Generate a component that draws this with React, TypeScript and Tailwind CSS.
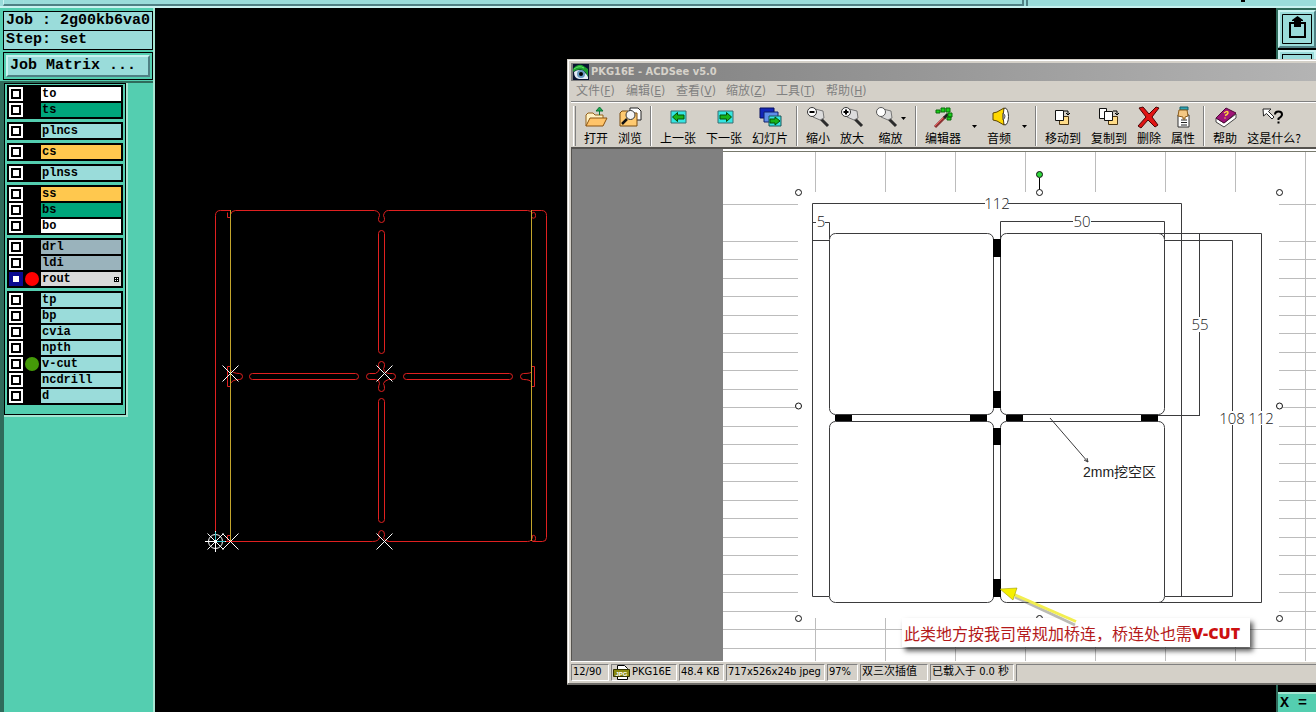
import React from "react";

type Layer = { name: string; tone: string; dot?: string; active?: boolean };

const AQUA = "bg-[#9adcda]";

const groups: Layer[][] = [
  [
    { name: "to", tone: "bg-white" },
    { name: "ts", tone: "bg-[#00a67c]" },
  ],
  [{ name: "plncs", tone: AQUA }],
  [{ name: "cs", tone: "bg-[#ffc84e]" }],
  [{ name: "plnss", tone: AQUA }],
  [
    { name: "ss", tone: "bg-[#ffc84e]" },
    { name: "bs", tone: "bg-[#00a67c]" },
    { name: "bo", tone: "bg-white" },
  ],
  [
    { name: "drl", tone: "bg-[#9ab3bc]" },
    { name: "ldi", tone: "bg-[#9ab3bc]" },
    { name: "rout", tone: "bg-[#d9d9d9]", dot: "bg-[#ff0000]", active: true },
  ],
  [
    { name: "tp", tone: AQUA },
    { name: "bp", tone: AQUA },
    { name: "cvia", tone: AQUA },
    { name: "npth", tone: AQUA },
    { name: "v-cut", tone: AQUA, dot: "bg-[#449a08]" },
    { name: "ncdrill", tone: AQUA },
    { name: "d", tone: AQUA },
  ],
];

function LayerRow({ layer }: { layer: Layer }) {
  return (
    <label className="flex h-[14px] items-center">
      <input
        type="checkbox"
        defaultChecked={layer.active}
        className="size-[14px] shrink-0 appearance-none border-2 border-white bg-white shadow-[inset_0_0_0_2px_#000] checked:border-[#0a0a90] checked:shadow-[inset_0_0_0_2px_#0a0a90]"
      />
      <span className="flex w-[18px] shrink-0 justify-center">
        {layer.dot && <span className={`size-[14px] rounded-full ${layer.dot}`} />}
      </span>
      <span
        className={`flex h-[14px] flex-1 items-center justify-between overflow-hidden pl-px text-[12px] leading-[14px] ${layer.tone}`}
      >
        {layer.name}
        {layer.active && (
          <svg viewBox="0 0 5 5" className="mr-0.5 size-[5px]" shapeRendering="crispEdges">
            <path d="M0 0h5v5H0z" fill="#000" />
            <path d="M1 1h1v1H1zM3 1h1v1H3zM1 3h1v1H1zM3 3h1v1H3z" fill="#fff" />
          </svg>
        )}
      </span>
    </label>
  );
}

function Sidebar() {
  return (
    <aside className="flex w-[155px] shrink-0 flex-col border-r-2 border-[#a6e6d2] bg-[#54ceb0] font-['Liberation_Mono',monospace] font-bold text-black">
      <div className="flex flex-col gap-0.5 pt-[3px] pb-px pl-[3px]">
        <dl className="border border-black bg-[#9adcda] text-[15px] whitespace-pre">
          <div className="flex h-[19px] items-center border-b border-black pl-0.5">
            <dt>Job : </dt>
            <dd>2g00kb6va0</dd>
          </div>
          <div className="flex h-[18px] items-center pl-0.5">
            <dt>Step: </dt>
            <dd>set</dd>
          </div>
        </dl>
        <div className="border border-black p-0.5">
          <button className="flex h-[22px] w-full items-center border-2 border-t-[#c8f2f0] border-r-[#4f8084] border-b-[#4f8084] border-l-[#c8f2f0] bg-[#9adcda] pl-0.5 text-[15px] whitespace-pre">
            Job Matrix ...
          </button>
        </div>
      </div>
      <div className="flex flex-1 items-start border-t-2 border-l-4 border-[#2f6b5b]">
        <div className="w-[124px] border-r-2 border-b-2 border-[#a6e6d2]">
          <div className="flex flex-col gap-[3px] border border-black px-0.5 pt-px pb-[9px]">
            {groups.map((g) => (
              <div key={g[0].name} className="flex flex-col gap-0.5 bg-black p-0.5">
                {g.map((l) => (
                  <LayerRow key={l.name} layer={l} />
                ))}
              </div>
            ))}
          </div>
        </div>
      </div>
    </aside>
  );
}

function Cross({ x, y }: { x: number; y: number }) {
  return <path d={`M${x - 8} ${y - 8}l16 16M${x + 8} ${y - 8}l-16 16`} stroke="#fff" fill="none" />;
}

function RoutDrawing() {
  return (
    <svg viewBox="202 198 360 360" className="h-[360px] w-[360px] shrink-0" fill="none">
      <g stroke="#e02020">
        <path d="M215.500 541.500V215.500Q215.500 210.500 220.500 210.500H230.500V217.500H227.500V212.500M230.500 214.500Q231.500 210.500 235.500 210.500H374.500Q379.500 211.500 379.500 215.500Q378.500 217.500 378.500 219.500Q378.500 222.500 381.500 222.500T384.500 219.500Q384.500 217.500 383.500 215.500Q384.500 210.500 388.500 210.500H527.500Q531.500 210.500 532.500 213.500M531.500 210.500H541.500Q546.500 210.500 546.500 215.500V537.500Q546.500 541.500 542.500 541.500H532.500M532.500 212.500q3 -1 3 3t-4 2v-5" />
        <path d="M215.500 541.500H372.500Q378.500 541.500 379.500 537.500Q378.500 536.500 378.500 534.500Q378.500 530.500 381.500 530.500T384.500 534.500Q384.500 536.500 383.500 537.500Q384.500 541.500 389.500 541.500H527.500Q532.500 541.500 532.500 535.500q3 -1 3 3t-4 2M230.500 535.500h-3v5" />
        <rect x="378.500" y="230.500" width="6" height="123" rx="3" />
        <rect x="378.500" y="398.500" width="6" height="124" rx="3" />
        <rect x="249.500" y="373.500" width="109" height="6" rx="3" />
        <rect x="403.500" y="373.500" width="109" height="6" rx="3" />
        <path d="M227.500 366.500h3V369.500Q232.500 373.500 239.500 373.500Q242.500 373.500 242.500 376.500T239.500 379.500Q232.500 379.500 230.500 383.500V386.500H227.500Z" />
        <path d="M534.500 366.500h-3V371.500Q531.500 373.500 523.500 373.500Q520.500 373.500 520.500 376.500T523.500 379.500Q530.500 379.500 531.500 382.500V386.500H534.500Z" />
        <path d="M369.500 373.500H375.500Q379.500 371.500 379.500 368.500Q378.500 367.500 378.500 364.500Q378.500 361.500 381.500 361.500T384.500 364.500Q384.500 367.500 383.500 368.500Q384.500 373.500 389.500 373.500H392.500Q395.500 373.500 395.500 376.500T392.500 379.500H388.500Q384.500 380.500 383.500 383.500Q384.500 385.500 384.500 388.500Q384.500 391.500 381.500 391.500T378.500 388.500Q378.500 385.500 379.500 383.500Q379.500 379.500 375.500 379.500H369.500Q366.500 379.500 366.500 376.500T369.500 373.500Z" />
      </g>
      <path d="M230.500 210V541M531.500 210V541" stroke="#c3a52c" />
      <Cross x={230.5} y={373.5} />
      <Cross x={384.5} y={373.5} />
      <Cross x={230.5} y={541.5} />
      <Cross x={384.5} y={541.5} />
      <g stroke="#fff">
        <circle cx="215.500" cy="541.500" r="7" />
        <path d="M205 541.500H226M215.500 531V552M207.500 533.500l16 16M223.500 533.500l-16 16" />
      </g>
      <path d="M217 541.500H225M215.500 540V532" stroke="#3cc8cc" />
    </svg>
  );
}

const gridX = [815.5, 885.5, 955.5, 1025.5, 1095.5, 1165.5, 1235.5];
const gridY = [
  204.5, 241.5, 259.5, 278.5, 296.5, 315.5, 333.5, 352.5, 370.5, 389.5, 407.5, 426.5, 444.5, 463.5, 481.5, 500.5,
  518.5, 537.5, 555.5, 574.5, 592.5, 611.5,
];
const handles = [
  [798.5, 192.5],
  [1279.5, 192.5],
  [798.5, 406],
  [1279.5, 406],
  [798.5, 618.5],
  [1039.5, 618.5],
  [1279.5, 618.5],
  [1039.5, 192.5],
];

function PanelDrawing() {
  return (
    <svg viewBox="723 149 593 512" className="h-[512px] w-[593px] shrink-0" fill="none">
      <g stroke="#bcbcbc">
        {gridX.map((x) => (
          <path key={x} d={`M${x} 152V192M${x} 618V661`} />
        ))}
        {gridY.map((y) => (
          <path key={y} d={`M723 ${y}H798M1279 ${y}H1316`} />
        ))}
        <path d="M723 629.500H1316M723 648.500H1316M1305.500 152V661" />
      </g>
      <path d="M723 151.500H1316" stroke="#77796c" />
      <g stroke="#3b3b3d">
        <rect x="829.500" y="233.500" width="164" height="181" rx="6" />
        <rect x="1000.500" y="233.500" width="164" height="181" rx="6" />
        <rect x="829.500" y="421.500" width="164" height="181" rx="6" />
        <rect x="1000.500" y="421.500" width="164" height="181" rx="6" />
        <path d="M985 203.500H812.500V596.500H829M1008 203.500H1181.500V596" />
        <path d="M812 222.500H816M825 222.500H829.500V239M812 240.500H829" />
        <path d="M1000.500 239V221.500H1073M1091 221.500H1164.500V239" />
        <path d="M1158 233.500H1261.500V411M1261.500 425V602.500H1158" />
        <path d="M1165 240.500H1232.500V411M1232.500 425V596.500H1165" />
        <path d="M1199.500 234V317M1199.500 332V415M1158 415.500H1200" />
        <path d="M1050 418L1088 462M1088 462l-1 -4M1088 462l-4 -2" />
      </g>
      <path
        fill="#000"
        d="M993 239h8v18h-8zM993 391h8v17h-8zM993 428h8v17h-8zM993 579h8v18h-8zM835 415h17v6h-17zM970 415h17v6h-17zM1006 415h17v6h-17zM1141 415h17v6h-17z"
      />
      <g
        fill="#222"
        fontSize="15"
        textAnchor="middle"
        className="font-['Open_Sans','Noto_Sans_CJK_SC',sans-serif] font-light"
      >
        <text x="997" y="209">112</text>
        <text x="821" y="227">5</text>
        <text x="1082" y="227">50</text>
        <text x="1200" y="330">55</text>
        <text x="1232" y="424">108</text>
        <text x="1261" y="424">112</text>
      </g>
      <text
        x="1083"
        y="477"
        fill="#222"
        fontSize="14"
        className="font-['Liberation_Sans','Noto_Sans_CJK_SC',sans-serif]"
      >
        2mm挖空区
      </text>
      <path d="M1039.500 178V190" stroke="#000" />
      <circle cx="1039.500" cy="174.500" r="3" fill="#2fd83c" stroke="#111" />
      {handles.map(([x, y]) => (
        <circle key={`${x}-${y}`} cx={x} cy={y} r="3" fill="#fff" stroke="#111" />
      ))}
    </svg>
  );
}

const Folder = ({ x, y }: { x: number; y: number }) => (
  <path d={`M${x} ${y}h3l1 1h5v8h-9z`} fill="#ffdc88" stroke="#4a3410" />
);

const icons: Record<string, React.ReactNode> = {
  open: (
    <>
      <path d="M2 20V9l2-2h5l2 2h8v3" fill="#fff2c4" stroke="#94601a" />
      <path d="M2 20l4-8h17l-4 8z" fill="#ffc46a" stroke="#8a5210" />
      <path d="M15.500 9V5M12 5l3.500-4L19 5z" fill="#18a850" stroke="#0c7434" />
    </>
  ),
  browse: (
    <>
      <path d="M12 2h8l3 3v9H12z" fill="#fff" stroke="#222" />
      <path d="M2 20V7l2-2h6l2 2h7v13z" fill="#ffca70" stroke="#7a4c10" />
      <path d="M9 13l-5 5" stroke="#111" strokeWidth="2.500" />
      <circle cx="12.500" cy="9" r="4.500" fill="#f4f4f4" stroke="#333" />
    </>
  ),
  prev: (
    <>
      <path d="M5 5h15v12H5z" fill="#34e6e2" stroke="#3c6c70" />
      <path d="M6.500 11l5-4.500V9H18v4h-6.500v2.500z" fill="#18b418" stroke="#064e06" />
    </>
  ),
  next: (
    <>
      <path d="M6 5h15v12H6z" fill="#34e6e2" stroke="#3c6c70" />
      <path d="M19.500 11l-5-4.500V9H8v4h6.500v2.500z" fill="#18b418" stroke="#064e06" />
    </>
  ),
  slides: (
    <>
      <path d="M2 2h14v10H2z" fill="#1226b8" stroke="#060e5c" />
      <path d="M6 6h14v10H6z" fill="#5f8eea" stroke="#10206c" />
      <path d="M11 10h12v10H11z" fill="#34e6e2" stroke="#1c5458" />
      <path d="M22 15l-5-4v2h-5v4h5v2z" fill="#18b418" stroke="#064e06" />
    </>
  ),
  minus: (
    <>
      <path d="M15 13l7 7" stroke="#2c2c2c" strokeWidth="3" />
      <path d="M9 3l8 2 1 7-4 2-7-3z" fill="#dcdcdc" stroke="#777" />
      <circle cx="6" cy="6" r="4.500" fill="#fff" stroke="#333" />
      <path d="M3.500 6h5" stroke="#000" strokeWidth="2" />
    </>
  ),
  plus: (
    <>
      <path d="M15 13l7 7" stroke="#2c2c2c" strokeWidth="3" />
      <path d="M9 3l8 2 1 7-4 2-7-3z" fill="#dcdcdc" stroke="#777" />
      <circle cx="6" cy="6" r="4.500" fill="#fff" stroke="#333" />
      <path d="M3.500 6h5M6 3.500v5" stroke="#000" strokeWidth="2" />
    </>
  ),
  zoom: (
    <>
      <path d="M13 13l7 7" stroke="#2c2c2c" strokeWidth="3" />
      <path d="M7 3l8 2 1 7-4 2-7-3z" fill="#dcdcdc" stroke="#777" />
      <circle cx="5" cy="6" r="4.500" fill="#fff" stroke="#555" />
    </>
  ),
  editor: (
    <>
      <path d="M4 21L14 11" stroke="#8c3434" strokeWidth="3" />
      <path d="M4 20L13 11" stroke="#e85c5c" />
      <path d="M13 12l4-4" stroke="#222" strokeWidth="3" />
      <path d="M5 4h4v3H5zM10 2h4v4h-4zM15 2h4v4h-4zM17 7h4v4h-4zM16 11h4v3h-4z" fill="#18d018" stroke="#0a6a0a" />
    </>
  ),
  audio: (
    <>
      <ellipse cx="18" cy="10.500" rx="3.500" ry="8.500" fill="#fff" stroke="#333" />
      <path d="M6 7l4-1 7-4q-2 8 0 17l-7-4-4-1z" fill="#ffd800" stroke="#5c4400" />
      <path d="M16 7q4 3 0 7z" fill="#b8b8c0" stroke="#555" />
    </>
  ),
  move: (
    <>
      <Folder x={8.5} y={9.5} />
      <path d="M4.500 4.500h8v10h-8z" fill="#fff" stroke="#111" />
      <path d="M13 5h4v4M15 7l2 2 2-2" stroke="#000" />
    </>
  ),
  copy: (
    <>
      <path d="M2.500 2.500h7v10h-7z" fill="#fff" stroke="#111" />
      <Folder x={11.5} y={9.5} />
      <path d="M7.500 5.500h8v9h-8z" fill="#fff" stroke="#111" />
      <path d="M16 5h4v4M18 7l2 2 2-2" stroke="#000" />
    </>
  ),
  remove: <path d="M2 2l4-1 6 7 7-7 3 1-7 9 6 8-3 2-7-7-7 8-3-2 8-9z" fill="#e01414" stroke="#4a0404" />,
  props: (
    <>
      <path d="M7 9h11v12H7z" fill="#fff" stroke="#333" />
      <path d="M10 14h6M10 16.500h6M10 19h6" stroke="#222" />
      <path d="M9 1h8v3H9z" fill="#2ea4b4" stroke="#145c68" />
      <path d="M8 4h8l1 6-3 1v2h-2v-2l-5-1z" fill="#f4c884" stroke="#8c5c1c" />
    </>
  ),
  help: (
    <>
      <path d="M3 12l8 5 12-9v4l-12 9-8-5z" fill="#fff" stroke="#444" />
      <path d="M3 12L13 2l10 5-12 10z" fill="#a01478" stroke="#500838" />
      <path d="M11 7q4-3 4 0-1 2-3 2.500M11.500 12h1" stroke="#ffd83c" strokeWidth="1.500" />
    </>
  ),
  what: (
    <>
      <path d="M1 3h8L6.500 5.500 12 11l-2 2-5.500-5.500L1.500 10z" fill="#fff" stroke="#222" />
      <path d="M13 8.500q0-3 3.500-3t3.500 3q0 2-3.500 4v1.500M16.500 15.500v2" stroke="#000" strokeWidth="2" />
    </>
  ),
};

type Tool = { icon: string; label: string; w: string; arrow?: boolean; inner?: boolean };

const tools: Tool[][] = [
  [
    { icon: "open", label: "打开", w: "w-[34px]" },
    { icon: "browse", label: "浏览", w: "w-[34px]" },
  ],
  [
    { icon: "prev", label: "上一张", w: "w-[46px]" },
    { icon: "next", label: "下一张", w: "w-[46px]" },
    { icon: "slides", label: "幻灯片", w: "w-[46px]" },
  ],
  [
    { icon: "minus", label: "缩小", w: "w-[34px]" },
    { icon: "plus", label: "放大", w: "w-[34px]" },
    { icon: "zoom", label: "缩放", w: "w-[43px]", inner: true },
  ],
  [
    { icon: "editor", label: "编辑器", w: "w-[46px]", arrow: true },
    { icon: "audio", label: "音频", w: "w-[34px]", arrow: true },
  ],
  [
    { icon: "move", label: "移动到", w: "w-[46px]" },
    { icon: "copy", label: "复制到", w: "w-[46px]" },
    { icon: "remove", label: "删除", w: "w-[34px]" },
    { icon: "props", label: "属性", w: "w-[34px]" },
  ],
  [
    { icon: "help", label: "帮助", w: "w-[34px]" },
    { icon: "what", label: "这是什么?", w: "w-[64px]" },
  ],
];

const Caret = () => (
  <svg viewBox="0 0 5 3" className="h-[3px] w-[5px] shrink-0" fill="#000">
    <path d="M0 0h5L2.500 3z" />
  </svg>
);

function ToolButton({ tool }: { tool: Tool }) {
  return (
    <>
      <button className={`flex shrink-0 flex-col items-center ${tool.w}`}>
        <span className="flex items-center gap-px">
          <svg viewBox="0 0 24 24" className="size-6" fill="none">
            {icons[tool.icon]}
          </svg>
          {tool.inner && <Caret />}
        </span>
        <span className="text-[12px] leading-4 whitespace-nowrap">{tool.label}</span>
      </button>
      {tool.arrow && (
        <button aria-label={`${tool.label} ▾`} className="flex h-10 w-4 shrink-0 items-center justify-center">
          <Caret />
        </button>
      )}
    </>
  );
}

const menus = [
  ["文件", "F"],
  ["编辑", "E"],
  ["查看", "V"],
  ["缩放", "Z"],
  ["工具", "T"],
  ["帮助", "H"],
];

const cells: [string, string][] = [
  ["12/90", "w-[38px]"],
  ["PKG16E", "w-[66px]"],
  ["48.4 KB", "w-[45px]"],
  ["717x526x24b jpeg", "w-[99px]"],
  ["97%", "w-[31px]"],
  ["双三次插值", "w-[68px]"],
  ["已载入于 0.0 秒", "w-[84px]"],
];

function ViewerWindow() {
  return (
    <section className="absolute top-[59px] right-0 left-[567px] flex flex-col overflow-hidden border-t border-b-2 border-l border-t-[#d4d0c8] border-b-[#6e6c68] border-l-[#d4d0c8] bg-[#d4d0c8] font-['DejaVu_Sans_Condensed','Noto_Sans_CJK_SC',sans-serif] text-black">
      <div className="flex flex-col border-t border-l border-white pt-0.5 pl-0.5">
        <header className="flex h-[18px] items-center gap-0.5 bg-linear-to-r from-[#7e7e7e] to-[#b4b4b4] pl-0.5">
          <svg viewBox="0 0 16 16" className="size-4" fill="none">
            <path d="M0 0h16v16H0z" fill="#0a1430" />
            <path d="M1 8q5-4 10 0t4 6v1H6Q1 14 1 8z" fill="#e4ecf4" />
            <circle cx="8" cy="10" r="4" fill="#6898c0" />
            <circle cx="8" cy="10" r="2" fill="#000" />
            <path d="M0 5Q4 0 9 1l6 4v8Q12 5 7 5.500T0 8z" fill="#1ca030" />
            <path d="M1 5Q6 1 11 4" stroke="#64e468" />
          </svg>
          <h1 className="text-[11px] font-bold whitespace-nowrap text-[#d6d2ca]">PKG16E - ACDSee v5.0</h1>
        </header>
        <nav className="flex h-[21px] items-center border-b border-[#808080] pl-[5px] text-[12px] text-[#808080]">
          {menus.map(([name, key]) => (
            <button key={key} className="w-[50px] shrink-0 text-left whitespace-nowrap">
              {name}(<u>{key}</u>)
            </button>
          ))}
        </nav>
        <div className="flex h-[45px] items-center border-t border-white pt-0.5 font-['Noto_Sans_CJK_SC',sans-serif]">
          <div className="ml-0.5 h-10 w-[3px] border-r border-l border-r-[#808080] border-l-white" />
          <div className="ml-[3px] flex items-center">
            {tools.map((group, i) => (
              <React.Fragment key={group[0].icon}>
                {i > 0 && (
                  <div className="flex w-2 shrink-0 justify-center">
                    <div className="h-10 w-0.5 border-r border-l border-r-white border-l-[#808080]" />
                  </div>
                )}
                {group.map((t) => (
                  <ToolButton key={t.icon} tool={t} />
                ))}
              </React.Fragment>
            ))}
          </div>
        </div>
        <div className="relative flex overflow-hidden border-t-2 border-l border-[#55534f] bg-white">
          <div className="w-[151px] shrink-0 bg-[#808080]" />
          <PanelDrawing />
          <p className="absolute top-[469px] left-[330px] flex h-[29px] w-[348px] items-center bg-white pl-0.5 font-['Noto_Sans_CJK_SC',sans-serif] text-[16px] whitespace-nowrap text-[#b41a1a] shadow-[3px_4px_5px_rgba(0,0,0,0.65)]">
            此类地方按我司常规加桥连，桥连处也需
            <strong className="font-['Open_Sans',sans-serif] text-[16px] font-extrabold text-[#cc1010]">V-CUT</strong>
          </p>
          <svg viewBox="998 584 80 44" className="absolute top-[435px] left-[427px] h-[44px] w-[80px]" fill="none">
            <path d="M1014 597L1074 625" stroke="#77776c" strokeWidth="3" opacity="0.5" />
            <path d="M1012 594L1075 621.500" stroke="#f2ee50" strokeWidth="3" />
            <path d="M999 589L1016 588L1012 600Z" fill="#f6f000" stroke="#8a8600" strokeWidth="0.500" />
          </svg>
        </div>
        <footer className="flex h-[22px] items-center gap-0.5 border-t border-white text-[11px]">
          {cells.map(([text, w], i) => (
            <div
              key={text}
              className={`flex h-[17px] shrink-0 items-center gap-0.5 overflow-hidden border border-t-[#808080] border-r-white border-b-white border-l-[#808080] pl-px whitespace-nowrap ${w}`}
            >
              {i === 1 && (
                <svg viewBox="0 0 17 15" className="h-[15px] w-[17px] shrink-0" fill="none">
                  <path d="M4.500 .500h7l3 3v11h-10z" fill="#fff" stroke="#000" />
                  <path d="M.500 4.500h16v7H.500z" fill="#8a8a10" stroke="#333300" />
                  <text
                    x="8.500"
                    y="10.500"
                    fill="#fff"
                    fontSize="6"
                    fontWeight="700"
                    textAnchor="middle"
                    className="font-['Liberation_Sans',sans-serif]"
                  >
                    JPG
                  </text>
                </svg>
              )}
              {text}
            </div>
          ))}
          <div className="h-[17px] flex-1 border-t border-l border-[#808080]" />
        </footer>
      </div>
    </section>
  );
}

export default function App() {
  return (
    <div className="relative flex min-h-screen flex-col overflow-hidden bg-black">
      <div className="flex h-2 border-b-2 border-[#c8f2f0] bg-[#9adcda]">
        <div className="ml-[3px] h-[6px] flex-1 border-r-2 border-b-2 border-l border-r-[#4f8084] border-b-[#4f8084] border-l-[#c8f2f0]" />
        <div className="ml-0.5 h-[6px] w-[290px] border-l-2 border-[#4f8084]">
          <div className="ml-[213px] h-0.5 w-1 bg-black" />
        </div>
      </div>
      <div className="flex flex-1">
        <Sidebar />
        <main className="flex-1 overflow-hidden pt-[190px] pl-[47px]">
          <RoutDrawing />
        </main>
        <aside className="flex w-10 shrink-0 flex-col justify-between border-l-2 border-[#2f6b5b]">
          <div className="flex flex-col gap-0.5 border-t-2 border-[#2f6b5b]">
            <button
              aria-label="Export"
              className="flex h-[38px] items-center justify-center border-2 border-t-[#c8f2f0] border-r-[#4f8084] border-b-[#4f8084] border-l-[#c8f2f0] bg-[#9adcda]"
            >
              <svg viewBox="0 0 32 32" className="size-8" fill="none">
                <path d="M1.500 1.500h29v29h-29z" stroke="#000" />
                <path d="M9 10h15v14H9z" stroke="#000" strokeWidth="2" />
                <path d="M13 14V8h-2v-1l5.500-4L22 7v1h-2v6z" fill="#000" />
              </svg>
            </button>
            <div className="h-[38px] border-2 border-[#c8f2f0] bg-[#9adcda] p-0.5">
              <div className="h-full border border-black" />
            </div>
          </div>
          <output className="flex h-5 items-end border-t-2 border-[#a6e6d2] bg-[#54ceb0] pl-0.5 font-['Liberation_Mono',monospace] text-[15px] leading-[17px] font-bold whitespace-pre text-black">
            X =
          </output>
        </aside>
      </div>
      <ViewerWindow />
    </div>
  );
}
